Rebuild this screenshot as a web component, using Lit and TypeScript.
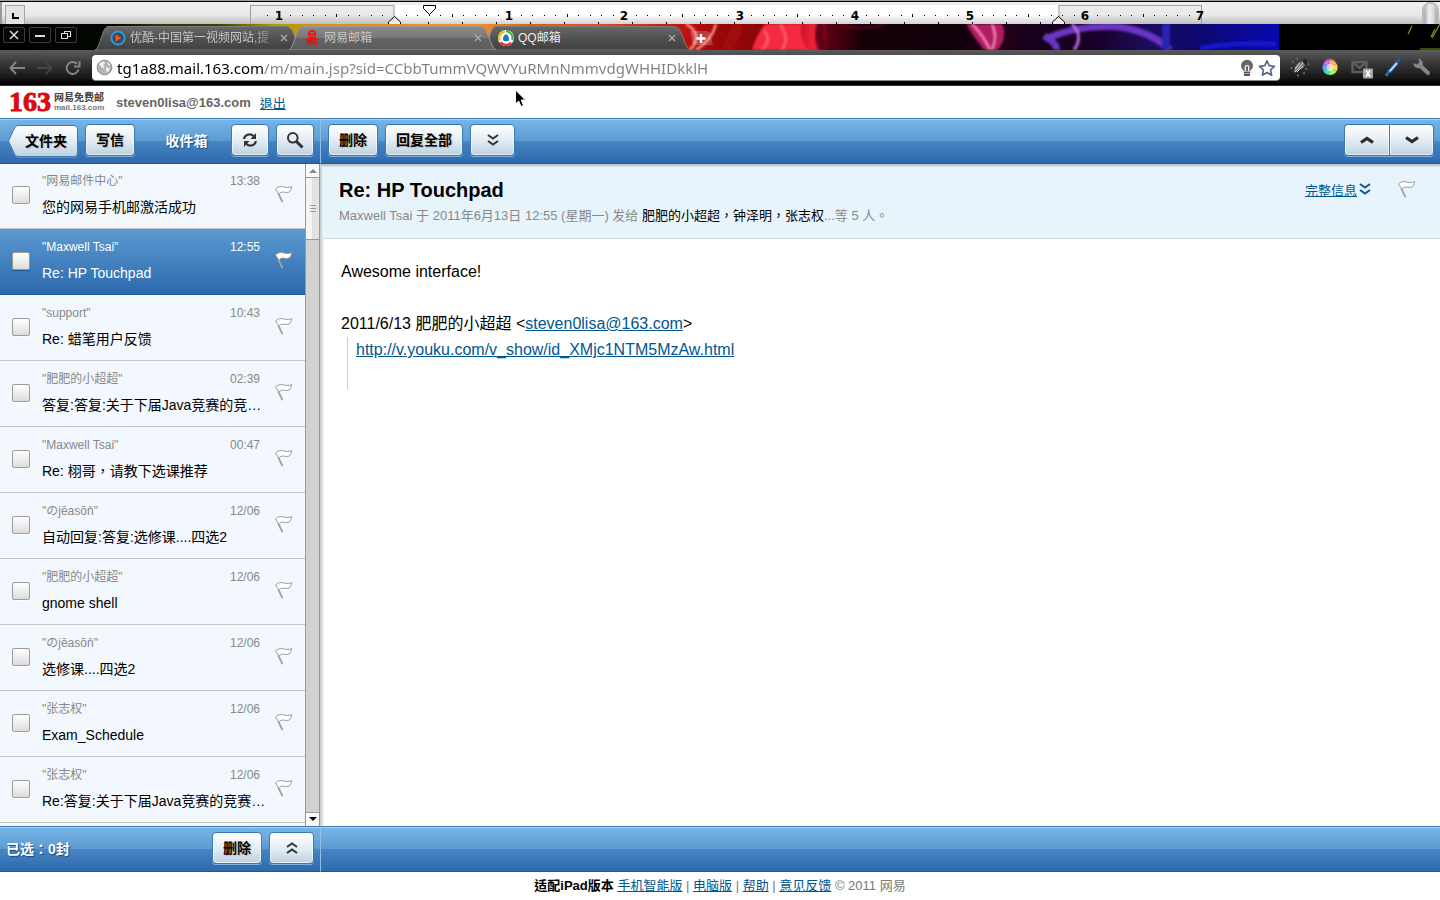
import { LitElement, html, svg, css } from "lit";
import { customElement, property, state } from "lit/decorators.js";

const sans = css`"Liberation Sans", Arial, "Noto Sans CJK TC", sans-serif`;

const flagIcon = html`<svg width="19" height="18" viewBox="0 0 19 18" aria-hidden="true">
  <path d="M1.500 4C3.600 1.600 6.800 1.100 9.600 1.900c2.800.8 5.400.7 8.200-.2-.6 1.900-1 3.700-2.200 5-2 1.300-4.400.6-6.400.4-1.800-.1-3.400.6-4.200 2.200z" fill="#fff" stroke="#9a9a9a" stroke-width="1" stroke-linejoin="round"/>
  <path d="M4.500 9l3.700 7.500" fill="none" stroke="#a4a4a4" stroke-width="1.800" stroke-linecap="round"/>
</svg>`;

const doubleDown = (c: string) => html`<svg width="12" height="14" viewBox="0 0 12 14" fill="none" stroke=${c} stroke-width="2" aria-hidden="true"><path d="M1 2l5 3.500L11 2M1 8l5 3.500L11 8"/></svg>`;
const doubleUp = html`<svg width="12" height="14" viewBox="0 0 12 14" fill="none" stroke="#333" stroke-width="2" aria-hidden="true"><path d="M1 6l5-3.500L11 6M1 12l5-3.500L11 12"/></svg>`;
const up = html`<svg width="14" height="10" viewBox="0 0 14 10" fill="none" stroke="#2b2b2b" stroke-width="3.200" aria-hidden="true"><path d="M1 7.500l6-4 6 4"/></svg>`;
const down = html`<svg width="14" height="10" viewBox="0 0 14 10" fill="none" stroke="#2b2b2b" stroke-width="3.200" aria-hidden="true"><path d="M1 2.500l6 4 6-4"/></svg>`;

@customElement("page-ruler")
export class PageRuler extends LitElement {
  static styles = css`
    :host { display: block; height: 24px; overflow: hidden; background: linear-gradient(#9f9f9f 1px, #000 1px, #000 2px, #f0f0f0 2px, #e8e8e8 15px, #c0c0c0 24px); }
    .row { display: flex; justify-content: space-between; }
    .scale { flex: none; width: 1204px; }
    .nub { width: 13px; height: 20px; margin: 4px 3px 0 0; border-radius: 7px 7px 0 0; background: linear-gradient(90deg, #aaa, #eee 40%, #ddd 70%, #aaa); box-shadow: 0 0 0 2px #bbb; }
    text { font: bold 12px "DejaVu Sans", sans-serif; text-anchor: middle; }
  `;
  render() {
    const dots = [];
    for (let i = -11; i <= 69; i++) {
      if (i % 10 === 0) continue;
      const x = Math.round(394 + i * 11.52);
      const half = Math.abs(i) % 10 === 5;
      dots.push(svg`<rect x=${x} y=${half ? 14 : 15} width="1" height=${half ? 3 : 1} fill="#000"/>`);
    }
    const stops = [];
    for (let x = 428; x < 1050; x += 34) stops.push(svg`<rect x=${x} y="22" width="1" height="2" fill="#000"/>`);
    return html`<div class="row">
      <svg class="scale" width="1204" height="24" viewBox="0 0 1204 24">
        <defs>
          <linearGradient id="w" x1="0" x2="0" y1="0" y2="1"><stop offset="0" stop-color="#fff"/><stop offset=".5" stop-color="#fff"/><stop offset="1" stop-color="#d4d4d4"/></linearGradient>
        </defs>
        <rect x="0" y="2" width="2" height="22" fill="#999"/>
        <rect x="5.500" y="5.500" width="19" height="22" fill="#e4e4e4" stroke="#a5a5a5"/>
        <path d="M13 13v5h6" fill="none" stroke="#000" stroke-width="2"/>
        <rect x="250.500" y="5.500" width="951" height="24" fill="none" stroke="#a0a0a0"/>
        <rect x="394" y="5" width="665" height="19" fill="url(#w)"/>
        <rect x="393.500" y="5" width="1" height="19" fill="#999"/><rect x="1058.500" y="5" width="1" height="19" fill="#999"/>
        ${dots}${stops}
        ${[-1, 1, 2, 3, 4, 5, 6, 7].map((n) => svg`<text x=${Math.round(394 + n * 115.2)} y="20">${Math.abs(n)}</text>`)}
        <path d="M423.500 5.500h12v3l-6 6-6-6z" fill="#fff" stroke="#000"/>
        <path d="M388.500 24v-2l6-5.500 6 5.500v2M1052.500 24v-2l6-5.500 6 5.500v2" fill="#eee" stroke="#000"/>
      </svg>
      <div class="nub"></div>
    </div>`;
  }
}

@customElement("browser-chrome")
export class BrowserChrome extends LitElement {
  static styles = css`
    :host { display: block; font-family: ${sans}; }
    button { border: 0; padding: 0; background: none; display: grid; place-items: center; }
    .strip { display: grid; height: 26px; background: #000; overflow: hidden; }
    .smoke { grid-area: 1 / 1; width: 100%; height: 26px; }
    .bar { grid-area: 1 / 1; display: flex; min-width: 0; z-index: 1; }
    .win { width: 22px; height: 16px; margin: 3px 4px 0 0; border: 1px solid #3c3c3c; border-radius: 2px; background: #060606; }
    .wins { display: flex; padding-left: 3px; width: 95px; box-sizing: border-box; }
    .tab { display: grid; width: 207px; height: 24px; margin: 2px -13px 0 0; }
    .tab.active { z-index: 2; }
    .shape { grid-area: 1 / 1; }
    .face { grid-area: 1 / 1; display: grid; grid-template-columns: 16px 145px 10px; column-gap: 4px; align-items: center; padding-left: 15px; z-index: 1; color: #c4c4c4; font-size: 12px; line-height: 24px; }
    .title { white-space: nowrap; overflow: hidden; }
    .fade { mask-image: linear-gradient(90deg, #000 120px, rgba(0, 0, 0, .3) 142px); }
    .white { color: #eee; }
    .plus { width: 24px; height: 16px; margin: 6px 0 0 12px; }
    .tools { display: flex; align-items: center; height: 36px; box-sizing: border-box; padding: 0 8px 1px; background: linear-gradient(#5c5c5c, #3a3a3a 12px, #161616 28px, #000 33px, #000 35px, #333 35px); }
    .nav { display: flex; gap: 10px; width: 84px; }
    .field { flex: 1; min-width: 0; display: flex; align-items: center; gap: 4px; height: 25px; padding: 0 4px; background: #fff; border-radius: 4px; box-shadow: 0 1px 0 #8a8a8a; }
    input { flex: 1; min-width: 0; border: 0; padding: 0; outline: 0; height: 24px; font: 15px "Noto Sans", sans-serif; color: transparent; background: linear-gradient(90deg, #000 147px, #808080 147px); -webkit-background-clip: text; background-clip: text; }
    .ext { display: flex; gap: 10px; padding-left: 10px; }
  `;
  tab(cls: string, icon: unknown, title: string, tcls: string) {
    const active = cls === "active";
    const id = active ? "ga" : "gi";
    return html`<div class="tab ${cls}">
      <svg class="shape" width="207" height="24" viewBox="0 0 207 24">
        <defs>
          <linearGradient id=${id} x1="0" x2="0" y1="0" y2="1">
            ${active
              ? svg`<stop offset="0" stop-color="#8a8a88"/><stop offset=".48" stop-color="#787876"/><stop offset=".5" stop-color="#646464"/><stop offset="1" stop-color="#5c5c5c"/>`
              : svg`<stop offset="0" stop-color="#686868"/><stop offset=".5" stop-color="#515151"/><stop offset="1" stop-color="#404040"/>`}
          </linearGradient>
        </defs>
        <path d="M0 24C5 22 7 4 11 1.500Q12 .5 14 .5H190Q194 .5 196 3C200 8 202 22 207 24z" fill="url(#${id})" stroke=${active ? "#9a9a98" : "#7a7a7a"} stroke-width="1"/>
      </svg>
      <div class="face">${icon}<span class="title ${tcls}">${title}</span>
        <button aria-label="关闭标签"><svg width="8" height="8" viewBox="0 0 8 8" stroke="#aaa" stroke-width="1.300"><path d="M1 1l6 6M7 1L1 7"/></svg></button>
      </div>
    </div>`;
  }
  render() {
    const youku = html`<svg width="16" height="16" viewBox="0 0 16 16"><circle cx="8" cy="8" r="6.600" fill="#3c4a55" stroke="#2b9be0" stroke-width="2"/><path d="M5.500 4.300l6 3.700-6 3.700z" fill="#f0522a"/></svg>`;
    const netease = html`<svg width="16" height="16" viewBox="0 0 16 16" fill="none" stroke="#f00b0b" stroke-width="1.600"><circle cx="8" cy="4" r="3.300"/><path d="M6 4.200h4.500M2.500 8.800h10.500M4.500 11.500h8c1.200 1.500.2 3.300-1.800 3.300M8 8.500c-1 2.500-3 4.500-5.500 5.500M10.800 11c-1 2-2.500 3.200-4.300 4M3 8.800c0 2 1.500 2.500 3 2.200"/></svg>`;
    const qq = html`<svg width="16" height="16" viewBox="0 0 16 16"><circle cx="8" cy="8" r="8" fill="#fff"/><path d="M1.500 10.500A7 7 0 0 1 7 1.300" fill="none" stroke="#f5b913" stroke-width="2.200"/><path d="M8 1.200a7 7 0 0 1 6.300 9" fill="none" stroke="#3fae49" stroke-width="2.200"/><path d="M2.500 12.200a7 7 0 0 0 10.600.4" fill="none" stroke="#e2322b" stroke-width="2.200"/><path d="M8 4C5.500 5.500 4.500 8 5.200 10.200c1 1.500 4.600 1.500 5.600 0C11.500 8 10.500 5.500 8 4z" fill="#1479c4"/></svg>`;
    return html`
      <div class="strip">
        <svg class="smoke" viewBox="0 0 1440 26" preserveAspectRatio="none" aria-hidden="true">
          <defs>
            <linearGradient id="s" gradientUnits="userSpaceOnUse" x1="0" x2="1440" y1="0" y2="0">
              <stop offset="0" stop-color="#000"/><stop offset=".08" stop-color="#020800"/><stop offset=".11" stop-color="#2c3a00"/><stop offset=".15" stop-color="#3c3c00"/><stop offset=".19" stop-color="#a8a000"/><stop offset=".22" stop-color="#d89010"/><stop offset=".33" stop-color="#f09030"/>
              <stop offset=".37" stop-color="#d86018"/><stop offset=".41" stop-color="#e05030"/><stop offset=".47" stop-color="#c81410"/><stop offset=".5" stop-color="#980808"/><stop offset=".53" stop-color="#880606"/><stop offset=".55" stop-color="#b00c18"/><stop offset=".565" stop-color="#f02038"/><stop offset=".575" stop-color="#5a0010"/>
              <stop offset=".6" stop-color="#160008"/><stop offset=".66" stop-color="#10000a"/><stop offset=".7" stop-color="#240018"/><stop offset=".71" stop-color="#18001c"/><stop offset=".76" stop-color="#180028"/><stop offset=".8" stop-color="#1c0c60"/><stop offset=".83" stop-color="#0c086c"/><stop offset=".86" stop-color="#0a0a90"/><stop offset=".888" stop-color="#0808b0"/>
            </linearGradient>
            <filter id="b" x="-30%" y="-30%" width="160%" height="160%"><feGaussianBlur stdDeviation="1.200"/></filter>
          </defs>
          <rect width="1279" height="26" fill="url(#s)"/>
          <g filter="url(#b)" fill="none">
            <path d="M696 26Q712 16 716 0M686 0Q704 10 690 26" stroke="#ff9a90" stroke-width="2.500"/>
            <path d="M738 0Q734 14 726 26" stroke="#a00808" stroke-width="12"/>
            <path d="M765 0Q756 12 752 26H808Q798 12 802 0z" fill="#f42c40"/>
            <path d="M780 0Q790 14 782 26M764 6Q772 16 762 26" stroke="#ff6474" stroke-width="2"/>
            <path d="M822 0Q816 12 824 26" stroke="#60001a" stroke-width="8"/>
            <path d="M840 0Q860 8 886 0" stroke="#70001c" stroke-width="1.500"/>
            <path d="M966 0H1002Q1008 12 998 26H984Q974 14 966 0z" fill="#b01c60"/>
            <path d="M972 0Q984 12 990 26M992 0Q998 12 992 26" stroke="#ff80c0" stroke-width="2"/>
            <path d="M1044 12Q1058 20 1056 26M1048 14Q1080 0 1120 3Q1152 8 1170 26" stroke="#6a34c0" stroke-width="7"/>
            <path d="M1072 0Q1084 12 1074 26" stroke="#b468dc" stroke-width="3"/>
            <path d="M1166 0V26" stroke="#2c20b0" stroke-width="8"/>
            <path d="M1200 24Q1240 18 1276 20" stroke="#1414d0" stroke-width="5"/>
          </g>
          <rect x="1279" width="161" height="26" fill="#000"/>
          <path d="M1412 2l-4 8M1440 0l-8 14M1435 5l-4 8M1420 25h20" stroke="#6a9c10" stroke-width="1.200"/>
        </svg>
        <div class="bar">
          <div class="wins">
            <button class="win" aria-label="关闭"><svg width="12" height="10" viewBox="0 0 12 10" stroke="#ddd" stroke-width="1.500"><path d="M2 1l8 8M10 1L2 9"/></svg></button>
            <button class="win" aria-label="最小化"><svg width="12" height="10" viewBox="0 0 12 10" stroke="#ddd" stroke-width="2"><path d="M1 6h10"/></svg></button>
            <button class="win" aria-label="还原"><svg width="12" height="10" viewBox="0 0 12 10" stroke="#ddd" fill="none"><rect x="4.500" y="1.500" width="6" height="5"/><rect x="1.500" y="3.500" width="6" height="5" fill="#060606"/></svg></button>
          </div>
          ${this.tab("", youku, "优酷-中国第一视频网站,提", "fade")}
          ${this.tab("active", netease, "网易邮箱", "")}
          ${this.tab("", qq, "QQ邮箱", "white")}
          <button class="plus" aria-label="新标签"><svg width="24" height="16" viewBox="0 0 24 16"><path d="M1 1H18Q20 1 21 4L24 15H6Q4 15 3 11z" fill="#fff" fill-opacity=".2"/><path d="M12 4v9M7.500 8.500h9" stroke="#fff" stroke-width="2.400"/></svg></button>
        </div>
      </div>
      <div class="tools">
        <div class="nav">
          <button aria-label="后退"><svg width="18" height="16" viewBox="0 0 18 16" fill="none" stroke="#858585" stroke-width="2"><path d="M8 2L2.500 8 8 14M3 8h14"/></svg></button>
          <button aria-label="前进"><svg width="18" height="16" viewBox="0 0 18 16" fill="none" stroke="#444" stroke-width="2"><path d="M10 2l5.500 6L10 14M15 8H1"/></svg></button>
          <button aria-label="刷新"><svg width="18" height="16" viewBox="0 0 18 16" fill="none" stroke="#858585" stroke-width="2"><path d="M14.500 9.500A6 6 0 1 1 13 3.800"/><path d="M15.500 1v5.500H10"/></svg></button>
        </div>
        <div class="field">
          <svg width="17" height="17" viewBox="0 0 17 17"><circle cx="8.500" cy="8.500" r="7.300" fill="#b4b4b4" stroke="#8c8c8c"/><path d="M3 5q2-3 5-2.500l1 2-2 1.500 1.500 2-1 1.500Q5 8.500 3 5zM10 8.500l3.500.5q.5 2-2.500 4.500-1.500-2-1-5zM11 3q3 1 3.500 4l-2-1z" fill="#f2f2f2"/></svg>
          <input aria-label="网址" .value=${"tg1a88.mail.163.com/m/main.jsp?sid=CCbbTummVQWVYuRMnNmmvdgWHHIDkklH"} />
          <svg width="14" height="18" viewBox="0 0 14 18"><path d="M7 .8a6 6 0 0 1 6 6c0 2.700-2 4-2.800 5.200H3.800C3 10.800 1 9.500 1 6.800a6 6 0 0 1 6-6z" fill="#666"/><path d="M5.300 12V7.500q1.700-2 3.400 0V12" fill="none" stroke="#fff" stroke-width="1.200"/><path d="M3.800 13.500h6.400M4 16h6" stroke="#555" stroke-width="1.800"/></svg>
          <svg width="18" height="18" viewBox="0 0 18 18"><path d="M9 1.800l2.200 4.900 5.300.6-3.900 3.600 1 5.300L9 13.600l-4.600 2.600 1-5.300L1.500 7.300l5.300-.6z" fill="#fff" stroke="#59698a" stroke-width="1.700" stroke-linejoin="round"/></svg>
        </div>
        <div class="ext">
          <svg width="20" height="20" viewBox="0 0 20 20"><path d="M4 16Q4 9 8 6l6-3q3 4-1 8z" fill="#777"/><path d="M5 15l8-9M7 15l6-6M5 12l5-6" stroke="#ccc" stroke-width="1"/><path d="M12 3l4-1 1 4-2 2z" fill="#222"/><g fill="#777"><circle cx="3" cy="5" r=".9"/><circle cx="7" cy="2" r=".9"/><circle cx="1.500" cy="11" r=".9"/><circle cx="16" cy="12" r=".9"/><circle cx="14" cy="16" r=".9"/><circle cx="8" cy="18.500" r=".9"/><circle cx="18.500" cy="7" r=".9"/></g></svg>
          <svg width="20" height="20" viewBox="0 0 20 20"><path d="M5 4q5-4 10 0" stroke="#666" stroke-width="2" fill="none"/><path d="M10 10.500V3A7.500 7.500 0 0 1 16.500 6.700z" fill="#ffb070"/><path d="M10 10.500L16.500 6.700A7.500 7.500 0 0 1 16.500 14.200z" fill="#ffd84c"/><path d="M10 10.500L16.500 14.200A7.500 7.500 0 0 1 10 18z" fill="#a8f060"/><path d="M10 10.500V18A7.500 7.500 0 0 1 3.500 14.200z" fill="#40e8a8"/><path d="M10 10.500L3.500 14.200A7.500 7.500 0 0 1 3.500 6.700z" fill="#60a0ff"/><path d="M10 10.500L3.500 6.700A7.500 7.500 0 0 1 10 3z" fill="#e068ff"/><circle cx="10" cy="10.500" r="3.500" fill="#fff" fill-opacity=".6"/></svg>
          <svg width="24" height="22" viewBox="0 0 24 22"><path d="M2.500 5h14v10h-14zM3 5.500l6.500 5.500L16 5.500" fill="none" stroke="#5c5c5c" stroke-width="2.400"/><rect x="13" y="11.500" width="10" height="10" rx="1" fill="#a8a8a8"/><path d="M16 13.500l4 6M20 13.500l-4 6" stroke="#fff" stroke-width="1.600"/></svg>
          <svg width="18" height="20" viewBox="0 0 18 20"><path d="M16 1l-4 5" stroke="#2a5484" stroke-width="4"/><path d="M13 6l-8 9" stroke="#2f78c8" stroke-width="3.500"/><path d="M13 6l-8 9" stroke="#d4e8f8" stroke-width="1.500"/><path d="M5 14l-3 5" stroke="#2a68b8" stroke-width="3"/></svg>
          <svg width="20" height="20" viewBox="0 0 20 20"><path d="M8 8.500l8 7.500" stroke="#858585" stroke-width="4" stroke-linecap="round"/><path d="M6 1.800A4.700 4.700 0 1 1 1.500 6l3.500 1.500L7.500 5z" fill="#858585"/></svg>
        </div>
      </div>`;
  }
}

interface Mail { from: string; time: string; subject: string }

const mails: Mail[] = [
  { from: "网易邮件中心", time: "13:38", subject: "您的网易手机邮激活成功" },
  { from: "Maxwell Tsai", time: "12:55", subject: "Re: HP Touchpad" },
  { from: "support", time: "10:43", subject: "Re: 蜡笔用户反馈" },
  { from: "肥肥的小超超", time: "02:39", subject: "答复:答复:关于下届Java竞赛的竞…" },
  { from: "Maxwell Tsai", time: "00:47", subject: "Re: 栩哥，请教下选课推荐" },
  { from: "のjēasŏň", time: "12/06", subject: "自动回复:答复:选修课....四选2" },
  { from: "肥肥的小超超", time: "12/06", subject: "gnome shell" },
  { from: "のjēasŏň", time: "12/06", subject: "选修课....四选2" },
  { from: "张志权", time: "12/06", subject: "Exam_Schedule" },
  { from: "张志权", time: "12/06", subject: "Re:答复:关于下届Java竞赛的竞赛…" },
];

@customElement("mail-row")
export class MailRow extends LitElement {
  @property({ attribute: false }) mail!: Mail;
  @property({ type: Boolean, reflect: true }) selected = false;
  static styles = css`
    :host { display: grid; grid-template-columns: 18px minmax(0, 1fr) 19px; column-gap: 12px; box-sizing: border-box; height: 66px; padding: 0 12px; border-bottom: 1px solid #c6c6c6; background: #f2f8fd; color: #000; }
    :host([selected]) { background: linear-gradient(#5c9ad2, #2c69ac); border-color: #1f5798; color: #fff; }
    input { appearance: none; width: 18px; height: 18px; margin: 23px 0 0; border: 1px solid #9b9b9b; border-radius: 2px; background: linear-gradient(#fff, #dcdcdc); box-shadow: 0 1px 0 #fff; }
    :host([selected]) input { box-shadow: 0 1px 1px #1f5798; }
    .text { display: grid; grid-template-columns: 1fr auto; grid-template-rows: 18px 26px; row-gap: 4px; padding: 9px 2px 0 0; white-space: nowrap; }
    .meta { font-size: 12px; line-height: 18px; color: #888; }
    :host([selected]) .meta { color: #fff; }
    .subject { grid-column: 1 / 3; font-size: 14px; line-height: 26px; }
    button { border: 0; padding: 0; background: none; height: 18px; margin-top: 22px; }
    svg { display: block; }
  `;
  render() {
    return html`
      <input type="checkbox" aria-label=${this.mail.subject} />
      <div class="text">
        <span class="meta">"${this.mail.from}"</span><span class="meta">${this.mail.time}</span>
        <span class="subject">${this.mail.subject}</span>
      </div>
      <button aria-label="标记">${flagIcon}</button>`;
  }
}

@customElement("app-root")
export class AppRoot extends LitElement {
  @state() selected = 1;
  static styles = css`
    :host { display: flex; flex-direction: column; height: 100vh; overflow: hidden; background: #fff; font-family: ${sans}; font-size: 13px; color: #000; }
    a { color: #00568f; }
    svg { display: block; }
    .account { display: flex; align-items: center; height: 32px; padding-left: 9px; color: #666; }
    .logo { display: flex; align-items: center; gap: 3px; width: 107px; }
    .num { font: bold 28px/30px "Liberation Serif", serif; color: #d80c10; -webkit-text-stroke: 1px #d80c10; }
    .brand { display: grid; font-weight: bold; font-size: 10px; line-height: 11px; color: #444; }
    .brand small { font-size: 8px; line-height: 10px; color: #777; }
    .user { font-weight: bold; margin-right: 9px; }
    .mail { flex: 1; min-height: 0; display: grid; grid-template-columns: 320px minmax(0, 1fr); grid-template-rows: 46px minmax(0, 1fr) 46px; }
    .blue { display: flex; align-items: center; box-sizing: border-box; border-top: 1px solid #3b7cba; border-bottom: 1px solid #1f5798; background: linear-gradient(#a4d4f4 1px, #79b4e7 1px, #5b9ad2 22px, #4785c3 22px, #2e69ab); color: #fff; gap: 7px; padding: 0 6px 2px 8px; }
    .right { border-left: 1px solid #8fbfe6; padding-left: 7px; }
    .blue .btn { box-sizing: border-box; height: 32px; min-width: 45px; padding: 0 10px; display: grid; place-items: center; border: 1px solid #3b79b5; border-radius: 4px; background: linear-gradient(#fff, #e4edf4 50%, #bdd1e1); box-shadow: inset 0 0 0 1px rgba(255, 255, 255, .6), 0 1px 0 #7fb3df; font: bold 14px/20px ${sans}; color: #000; text-shadow: 1px 1px 1px #bbb; white-space: nowrap; }
    .blue .narrow { min-width: 38px; padding: 0; }
    .blue .folder { padding: 0; width: 70px; border: 0; background: none; box-shadow: none; }
    .folder svg, .folder span { grid-area: 1 / 1; }
    .folder span { padding-left: 6px; z-index: 1; }
    .heading { flex: 1; padding-left: 7px; text-align: center; font-size: 14px; font-weight: bold; text-shadow: 1px 1px 1px #174a85; }
    .grow { flex: 1; }
    .count { flex: 1; margin-left: -2px; font-size: 14px; font-weight: bold; text-shadow: 1px 1px 1px #174a85; }
    .pair { display: flex; }
    .pair .btn:first-child { border-radius: 4px 0 0 4px; border-right: 0; }
    .pair .btn:last-child { border-radius: 0 4px 4px 0; }
    .left { display: flex; min-height: 0; overflow: hidden; background: #f2f8fd; }
    .list { flex: 1; margin-top: -1px; }
    .scroll { display: flex; flex-direction: column; width: 15px; box-sizing: border-box; border-left: 1px solid #999; border-right: 1px solid #999; background: #d2d2d2; }
    .arrow { flex: none; height: 14px; border: 0; padding: 0; background: #fafafa; display: grid; place-items: center; }
    .arrow.top { border-bottom: 1px solid #999; }
    .arrow.bottom { border-top: 1px solid #999; }
    .thumb { height: 61px; display: grid; place-items: center; background: linear-gradient(90deg, #f4f4f4 50%, #e2e2e2 50%); border-bottom: 1px solid #999; }
    .reader { min-width: 0; background: #fff; box-shadow: inset 2px 0 0 #cfd0d2, inset 4px 0 0 #ececec; }
    .head { display: flex; justify-content: space-between; box-sizing: border-box; height: 75px; padding: 13px 24px 0 19px; border-bottom: 1px solid #d6d9db; background: #e8f4fb; box-shadow: inset 0 2px 0 #c2c9d3, inset 0 3px 0 #d8e2ea, inset 2px 0 0 #cfd0d2; }
    h1 { margin: 0; font-size: 20px; line-height: 26px; }
    .info { margin: 0; line-height: 26px; color: #888; }
    .info b { font-weight: normal; color: #000; }
    .side { display: flex; height: 24px; align-items: center; }
    .side a { display: flex; align-items: center; gap: 2px; }
    .side button { border: 0; padding: 0; margin-left: 26px; background: none; }
    .body { padding: 20px 21px; font-size: 16px; line-height: 26px; }
    .body p { margin: 0; }
    .quote { min-height: 52px; margin: 0 0 0 6px; padding-left: 8px; border-left: 1px solid #ccc; }
    footer { height: 28px; line-height: 27px; text-align: center; color: #777; }
    footer strong { color: #000; }
    .cursor { position: absolute; left: 514px; top: 89px; }
  `;
  render() {
    return html`
      <page-ruler></page-ruler>
      <browser-chrome></browser-chrome>
      <header class="account">
        <div class="logo"><span class="num">163</span><span class="brand">网易免费邮<small>mail.163.com</small></span></div>
        <span class="user">steven0lisa@163.com</span><a href="#">退出</a>
      </header>
      <main class="mail">
        <div class="blue">
          <button class="btn folder">
            <svg width="70" height="34" viewBox="0 0 70 34">
              <defs><linearGradient id="f" x1="0" x2="0" y1="0" y2="1"><stop offset="0" stop-color="#fff"/><stop offset=".5" stop-color="#e4edf4"/><stop offset="1" stop-color="#bdd1e1"/></linearGradient></defs>
              <path d="M.5 18L6.500 5Q8 2.500 10 2.500H66Q69.500 2.500 69.500 6V30Q69.500 33.500 66 33.500H10Q8 33.500 6.500 31z" fill="#7fb3df"/>
              <path d="M.5 17L6.500 4Q8 1.500 10 1.500H66Q69.500 1.500 69.500 5V29Q69.500 32.500 66 32.500H10Q8 32.500 6.500 30z" fill="url(#f)" stroke="#3b79b5"/>
            </svg><span>文件夹</span>
          </button>
          <button class="btn">写信</button>
          <span class="heading">收件箱</span>
          <button class="btn narrow" aria-label="刷新"><svg width="16" height="16" viewBox="0 0 16 16" fill="none" stroke="#333" stroke-width="2.200"><path d="M2.200 7C2.200 3 8 .5 11.500 4M13.800 9C13.800 13 8 15.500 4.500 12"/><path d="M14 1v6H8.500zM2 15V9h5.500z" fill="#333" stroke="none"/></svg></button>
          <button class="btn narrow" aria-label="搜索"><svg width="18" height="18" viewBox="0 0 18 18" fill="none" stroke="#333"><circle cx="6.800" cy="6.800" r="4.800" stroke-width="2"/><path d="M10.500 10.500l6 6" stroke-width="3"/></svg></button>
        </div>
        <div class="blue right">
          <button class="btn">删除</button><button class="btn">回复全部</button>
          <button class="btn" aria-label="更多">${doubleDown("#333")}</button>
          <span class="grow"></span>
          <div class="pair"><button class="btn" aria-label="上一封">${up}</button><button class="btn" aria-label="下一封">${down}</button></div>
        </div>
        <section class="left">
          <div class="list">${mails.map((m, i) => html`<mail-row .mail=${m} ?selected=${i === this.selected} @click=${() => (this.selected = i)}></mail-row>`)}</div>
          <div class="scroll">
            <button class="arrow top" aria-label="向上"><svg width="8" height="5" viewBox="0 0 8 5"><path d="M0 5l4-4 4 4z" fill="#888"/></svg></button>
            <div class="thumb"><svg width="6" height="8" viewBox="0 0 6 8" stroke="#999"><path d="M0 .5h6M0 3.500h6M0 6.500h6"/></svg></div>
            <span class="grow"></span>
            <button class="arrow bottom" aria-label="向下"><svg width="8" height="5" viewBox="0 0 8 5"><path d="M0 0l4 4 4-4z" fill="#000"/></svg></button>
          </div>
        </section>
        <article class="reader">
          <div class="head">
            <div>
              <h1>Re: HP Touchpad</h1>
              <p class="info">Maxwell Tsai 于 2011年6月13日 12:55 (星期一) 发给 <b>肥肥的小超超，钟泽明，张志权</b>...等 5 人。</p>
            </div>
            <div class="side"><a href="#">完整信息${doubleDown("#0a5a96")}</a><button aria-label="标记">${flagIcon}</button></div>
          </div>
          <div class="body">
            <p>Awesome interface!</p><br />
            <p>2011/6/13 肥肥的小超超 &lt;<a href="#">steven0lisa@163.com</a>&gt;</p>
            <blockquote class="quote"><a href="#">http://v.youku.com/v_show/id_XMjc1NTM5MzAw.html</a></blockquote>
          </div>
        </article>
        <div class="blue"><span class="count">已选：0封</span><button class="btn">删除</button><button class="btn" aria-label="展开">${doubleUp}</button></div>
        <div class="blue right"></div>
      </main>
      <footer><strong>适配iPad版本</strong> <a href="#">手机智能版</a> | <a href="#">电脑版</a> | <a href="#">帮助</a> | <a href="#">意见反馈</a> © 2011 网易</footer>
      <svg class="cursor" width="13" height="20" viewBox="0 0 13 20" aria-hidden="true"><path d="M1.500 1v14l3.200-3 2.300 5.500 2.500-1L7.200 11h4.300z" fill="#000" stroke="#fff"/></svg>`;
  }
}
